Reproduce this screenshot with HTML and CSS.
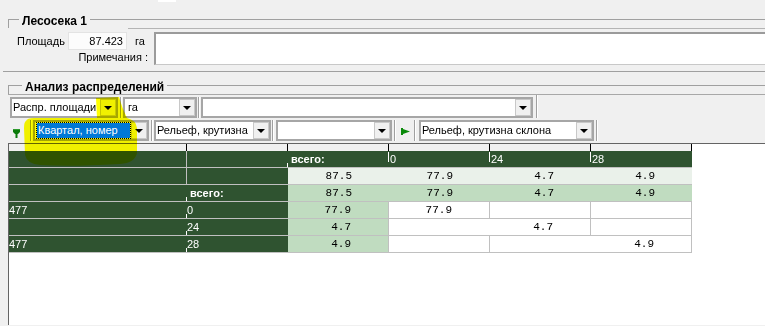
FILE: index.html
```html
<!DOCTYPE html>
<html lang="ru">
<head>
    <meta charset="UTF-8">
    <title>Лесосека 1</title>
    <link rel="stylesheet" href="styles.css">
</head>
<body>
    <div class="strip"><div class="tab-bit"></div></div>

    <div class="grp-head"><span class="grp-title">Лесосека 1</span></div>
    <div class="memo-top"></div>
    <div class="area">
        <div class="area-left">
            <div class="fld-row">
                <span class="lbl">Площадь</span>
                <span class="num-in">87.423</span>
                <span class="unit">га</span>
            </div>
            <div class="notes-lbl">Примечания :</div>
        </div>
        <div class="memo"></div>
    </div>

    <div class="divider"></div>

    <div class="grp-head grp2"><span class="grp-title">Анализ распределений</span></div>

    <!-- first toolbar: value, unit, filter -->
    <div class="bar bar1">
        <div class="combo c-kind"><span class="val">Распр. площади</span><span class="dd"><i class="tri"></i></span></div>
        <div class="sep s1"></div>
        <div class="combo c-unit"><span class="val">га</span><span class="dd"><i class="tri"></i></span></div>
        <div class="sep s2"></div>
        <div class="combo c-wide"><span class="val"></span><span class="dd"><i class="tri"></i></span></div>
        <div class="sep s3"></div>
    </div>

    <!-- second toolbar: rows / columns -->
    <div class="bar bar2">
        <svg class="flag-down" width="8" height="10" viewBox="0 0 8 10">
            <path d="M0 0H7V3L5 5H4.5V9H2.5V5H2L0 3Z" fill="#0a7a0a"/>
            <path d="M0 0H7V1H0Z" fill="#2e9a2e"/>
        </svg>
        <div class="sep s4"></div>
        <div class="combo c-row"><span class="val"><span class="sel">Квартал, номер</span></span><span class="dd"><i class="tri"></i></span></div>
        <div class="sep s5"></div>
        <div class="combo c-col"><span class="val">Рельеф, крутизна</span><span class="dd"><i class="tri"></i></span></div>
        <div class="sep s6"></div>
        <div class="combo c-empty"><span class="val"></span><span class="dd"><i class="tri"></i></span></div>
        <div class="sep s7"></div>
        <svg class="flag-right" width="9" height="7" viewBox="0 0 9 7">
            <path d="M0 0H2V1L9 3.5L2 6V7H0Z" fill="#0a8a0a"/>
        </svg>
        <div class="sep s8"></div>
        <div class="combo c-sel"><span class="val">Рельеф, крутизна склона</span><span class="dd"><i class="tri"></i></span></div>
        <div class="sep s9"></div>
    </div>

    <div class="grid-wrap">
        <div class="grid">
            <div class="hd"></div><div class="hd"></div><div class="hd"></div><div class="hd"></div><div class="hd"></div><div class="hd"></div>

            <div class="c dk br"></div>
            <div class="c dk tkb"></div>
            <div class="c dk tot tkt">всего:</div>
            <div class="c dk hl tkt">0</div>
            <div class="c dk hl tkt">24</div>
            <div class="c dk hl">28</div>

            <div class="c dk br"></div>
            <div class="c dk"></div>
            <div class="c lt num">87.5</div>
            <div class="c lt num">77.9</div>
            <div class="c lt num">4.7</div>
            <div class="c lt num">4.9</div>

            <div class="c dk tkb"></div>
            <div class="c dk tot">всего:</div>
            <div class="c gr num">87.5</div>
            <div class="c gr num">77.9</div>
            <div class="c gr num">4.7</div>
            <div class="c gr num">4.9</div>

            <div class="c dk tkb">477</div>
            <div class="c dk">0</div>
            <div class="c gr num br">77.9</div>
            <div class="c wh num br">77.9</div>
            <div class="c wh br"></div>
            <div class="c wh br"></div>

            <div class="c dk tkb"></div>
            <div class="c dk">24</div>
            <div class="c gr num br">4.7</div>
            <div class="c wh"></div>
            <div class="c wh num br">4.7</div>
            <div class="c wh br"></div>

            <div class="c dk tkb">477</div>
            <div class="c dk">28</div>
            <div class="c gr num br">4.9</div>
            <div class="c wh br"></div>
            <div class="c wh"></div>
            <div class="c wh num br">4.9</div>
        </div>
    </div>

    <!-- highlighter mark drawn over the screenshot -->
    <svg class="marker" width="765" height="326" viewBox="0 0 765 326">
        <path d="M26 121 Q27 118 34 118 L97 118 L96 98 L119 97 Q122 108 127 118 Q136 120 137 128 L137 153 Q135 163 120 164 Q70 167 40 165 Q27 164 25 155 L24 128 Q24 122 26 121 Z" fill="#ffff00"/>
    </svg>
</body>
</html>
```

FILE: styles.css
```css
* {
    margin: 0;
    padding: 0;
    box-sizing: border-box;
}

body {
    width: 765px;
    height: 326px;
    overflow: hidden;
    background: #f0f0f0;
    font-family: "Liberation Sans", Arial, sans-serif;
    font-size: 11px;
    color: #000;
}

.strip {
    height: 19px;
}

.tab-bit {
    margin-left: 158px;
    width: 18px;
    height: 2px;
    background: #fff;
}

/* group box headers */
.grp-head {
    margin-left: 8px;
    height: 9px;
    border-top: 1px solid #a0a0a0;
    border-left: 1px solid #a0a0a0;
}

.grp-title {
    display: inline-block;
    margin: -6px 0 0 10px;
    padding: 0 3px;
    background: #f0f0f0;
    font-size: 12px;
    font-weight: bold;
    line-height: 14px;
    vertical-align: top;
}

.grp2 {
    margin-top: 13px;
}

.grp2 .grp-title {
    margin-left: 13px;
}

.memo-top {
    margin-left: 128px;
    height: 4px;
    border-top: 1px solid #b4b4b4;
}

/* area + notes */
.area {
    display: flex;
    height: 33px;
}

.area-left {
    width: 154px;
}

.fld-row {
    display: flex;
    align-items: center;
    height: 18px;
}

.lbl {
    margin-left: 17px;
    width: 51px;
}

.num-in {
    width: 59px;
    height: 18px;
    background: #fcfcfc;
    border: 1px solid #e3e3e3;
    text-align: right;
    padding-right: 3px;
    line-height: 16px;
}

.unit {
    margin-left: 8px;
}

.notes-lbl {
    text-align: right;
    padding-right: 6px;
    line-height: 15px;
}

.memo {
    flex: 1;
    height: 33px;
    background: #fff;
    border-top: 2px solid #9b9b9b;
    border-left: 2px solid #9b9b9b;
    border-bottom: 1px solid #c8c8c8;
}

.divider {
    margin: 6px 0 0 3px;
    border-top: 1px solid #a0a0a0;
}

/* toolbars */
.bar {
    display: flex;
    align-items: center;
    margin-left: 8px;
    height: 21px;
}

.bar1 {
    height: 24px;
    border-top: 1px solid #a8a8a8;
    padding: 2px 0 0 2px;
    align-items: flex-start;
}

.bar2 {
    margin-top: 2px;
}

.sep {
    width: 1px;
    height: 21px;
    background: #a0a0a0;
    box-shadow: 1px 0 0 #fff;
}

.s1 { margin: 0 2px; }
.s2 { margin: 0 2px 0 1px; }
.s3 { margin: -2px 0 0 3px; height: 23px; }
.s4 { margin: 0 2px 0 9px; }
.s5 { margin: 0 2px; }
.s6 { margin: 0 3px 0 1px; }
.s7 { margin: 0 6px 0 2px; }
.s8 { margin: 0 4px 0 4px; }
.s9 { margin: 0 0 0 2px; }

.flag-down {
    margin-left: 5px;
    align-self: flex-end;
    margin-bottom: 2px;
}

.flag-right {
    margin-top: 1px;
}

.combo {
    display: flex;
    align-items: stretch;
    height: 21px;
    background: #fff;
    border: 2px solid #a6a6a6;
}

.combo .val {
    flex: 1;
    padding-left: 1px;
    line-height: 17px;
    white-space: nowrap;
    overflow: hidden;
    display: flex;
    align-items: center;
}

.c-kind { width: 108px; }
.c-unit { width: 74px; }
.c-unit .val { padding-left: 3px; }
.c-wide { width: 332px; }
.c-row { width: 116px; }
.c-col { width: 117px; }
.c-empty { width: 116px; }
.c-sel { width: 175px; }

.dd {
    width: 16px;
    background: #f0f0f0;
    border: 1px solid #c8c8c8;
    display: flex;
    align-items: center;
    justify-content: center;
}

.tri {
    width: 0;
    height: 0;
    border-left: 4px solid transparent;
    border-right: 4px solid transparent;
    border-top: 4px solid #000;
}

.sel {
    position: relative;
    z-index: 6;
    display: block;
    width: 93px;
    height: 15px;
    line-height: 15px;
    margin-left: 1px;
    padding-left: 1px;
    background: #0078d7;
    color: #fff;
    outline: 1px dotted #000;
}

/* distribution grid */
.grid-wrap {
    margin: 2px 0 0 8px;
    height: 182px;
    background: #fff;
    border-left: 1px solid #646464;
    border-top: 1px solid #646464;
}

.grid {
    display: grid;
    grid-template-columns: 178px repeat(5, 101px);
    width: 683px;
}

.hd {
    height: 7px;
    background: #f0f0f0;
    border-right: 1px solid #000;
}

.c {
    height: 17px;
    border-bottom: 1px solid #c0c0c0;
    line-height: 16px;
    white-space: nowrap;
    overflow: hidden;
}

.dk {
    background-color: #2f5330;
    color: #fff;
}

.lt { background-color: #eaf1ea; }
.gr { background-color: #c0dcc0; }
.wh { background-color: #fff; }

.br { border-right: 1px solid #c0c0c0; }

.tot {
    font-weight: bold;
    padding-left: 3px;
}

.hl {
    padding-left: 1px;
}

.num {
    font-family: "Liberation Mono", "Courier New", monospace;
    font-size: 11px;
    text-align: right;
    padding-right: 37px;
}

/* little white ticks at column edges of the header area */
.tkb,
.tkt {
    background-image: linear-gradient(#fff, #fff);
    background-repeat: no-repeat;
}

.tkb {
    background-position: right bottom;
    background-size: 1px 4px;
}

.tkt {
    background-position: right 1px;
    background-size: 1px 10px;
}

.marker {
    position: absolute;
    left: 0;
    top: 0;
    z-index: 5;
    pointer-events: none;
    mix-blend-mode: multiply;
}
```
